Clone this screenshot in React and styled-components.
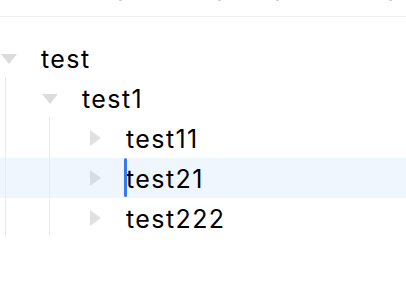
import React from 'react';
import styled, { createGlobalStyle } from 'styled-components';

// Component variables
const indent = 44;
const rowHeight = 40;
const textColor = '#000000';
const guideColor = '#ebebeb';
const toggleColor = '#dcdcdc';
const selectedBg = '#f0f6fe';
const caretColor = '#3a78f2';

const GlobalStyle = createGlobalStyle`
  body {
    margin: 0;
    background: #ffffff;
    font-family: Inter, "Noto Sans", "Liberation Sans", sans-serif;
    overflow: hidden;
  }
`;

const Page = styled.div`
  width: 406px;
  height: 308px;
  overflow: hidden;
`;

const TopBar = styled.div`
  height: 16px;
  border-bottom: 1px solid #efefef;
  display: flex;
  align-items: flex-start;
  overflow: hidden;
`;

const Mark = styled.span`
  width: 3px;
  height: 1px;
  margin-left: ${(p) => p.$left}px;
  background: #d0d0d0;
  border-radius: 1px;
`;

const Tree = styled.div`
  padding-top: 21px;
  display: flex;
  flex-direction: column;
`;

const Children = styled.div`
  position: relative;
  display: flex;
  flex-direction: column;

  &::before {
    content: '';
    position: absolute;
    top: -1px;
    bottom: 1px;
    left: ${(p) => p.$depth * indent + 5}px;
    width: 1px;
    background: ${guideColor};
    z-index: 1;
  }
`;

const Row = styled.div`
  height: ${rowHeight}px;
  display: flex;
  align-items: center;
  padding-left: ${(p) => p.$depth * indent - 3}px;
  background: ${(p) => (p.$selected ? selectedBg : 'transparent')};
`;

const Toggle = styled.span`
  width: 18px;
  height: 18px;
  flex: none;
  display: flex;
  align-items: center;
  justify-content: center;
`;

const ArrowDown = styled.span`
  width: 0;
  height: 0;
  border-left: 8px solid transparent;
  border-right: 8px solid transparent;
  border-top: 10px solid ${toggleColor};
  margin-top: 2px;
`;

const ArrowRight = styled.span`
  width: 0;
  height: 0;
  border-top: 8px solid transparent;
  border-bottom: 8px solid transparent;
  border-left: 11px solid ${(p) => (p.$selected ? '#d8dde4' : '#e0e0e0')};
  margin-left: 2px;
`;

const Label = styled.span`
  position: relative;
  margin-left: 23px;
  padding-top: 2px;
  font-size: 25px;
  font-weight: 400;
  color: ${textColor};
  letter-spacing: 1.4px;
  line-height: ${rowHeight - 2}px;
`;

const Caret = styled.span`
  position: absolute;
  left: -2px;
  top: 0;
  bottom: 1px;
  width: 3px;
  border-radius: 2px;
  background: ${caretColor};
`;

const data = {
  title: 'test',
  children: [
    {
      title: 'test1',
      children: [
        { title: 'test11', children: [] },
        { title: 'test21', children: [], selected: true },
        { title: 'test222', children: [] },
      ],
    },
  ],
};

function Node({ node, depth }) {
  const expanded = node.children.length > 0;
  return (
    <>
      <Row $depth={depth} $selected={node.selected}>
        <Toggle>
          {expanded ? <ArrowDown /> : <ArrowRight $selected={node.selected} />}
        </Toggle>
        <Label>
          {node.selected && <Caret />}
          {node.title}
        </Label>
      </Row>
      {expanded && (
        <Children $depth={depth}>
          {node.children.map((child) => (
            <Node key={child.title} node={child} depth={depth + 1} />
          ))}
        </Children>
      )}
    </>
  );
}

export default function App() {
  return (
    <Page>
      <GlobalStyle />
      <TopBar>
        <Mark $left={119} />
        <Mark $left={96} />
        <Mark $left={55} />
        <Mark $left={110} />
      </TopBar>
      <Tree>
        <Node node={data} depth={0} />
      </Tree>
    </Page>
  );
}
